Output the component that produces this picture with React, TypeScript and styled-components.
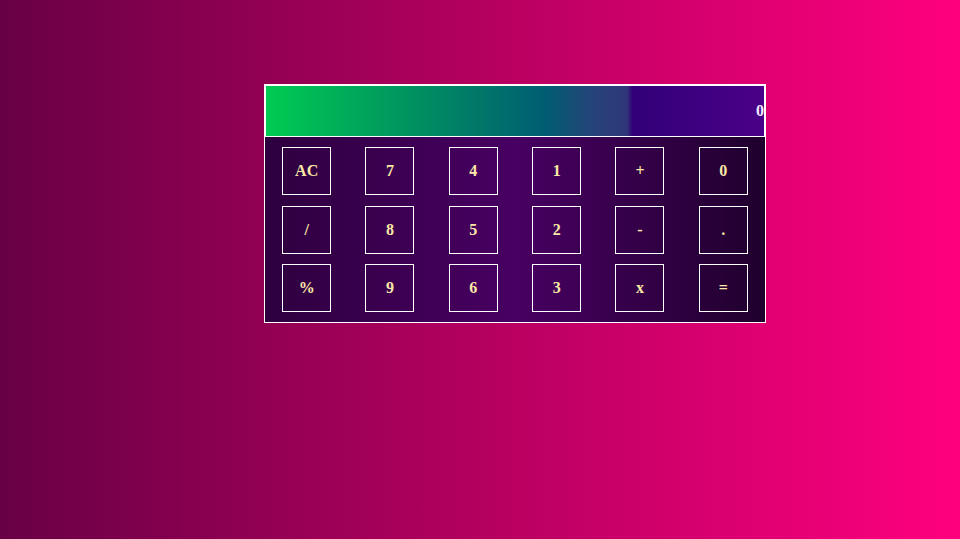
import React from "react";
import styled, { createGlobalStyle } from "styled-components";

const Global = createGlobalStyle`
  html, body { margin: 0; padding: 0; }
  body {
    width: 960px;
    height: 539px;
    overflow: hidden;
    background: linear-gradient(to right, #680045 0%, #b4005f 50%, #ff007f 100%);
    font-family: "Liberation Serif", "Times New Roman", serif;
  }
`;

const Page = styled.div`
  width: 960px;
  height: 539px;
  padding-top: 84px;
  padding-left: 264px;
  box-sizing: border-box;
`;

const Calculator = styled.div`
  width: 502px;
  box-sizing: border-box;
  border: 1px solid #ffffff;
  display: flex;
  flex-direction: column;
`;

const Display = styled.div`
  height: 52px;
  box-sizing: border-box;
  border: 1px solid #ffffff;
  background: linear-gradient(
    to right,
    #00cb52 0%,
    #009060 30%,
    #005d72 56%,
    #27427a 66%,
    #2f3679 72.5%,
    #320078 73.6%,
    #4a0088 100%
  );
  display: flex;
  align-items: center;
  justify-content: flex-end;
  color: #f2eaff;
  font-weight: bold;
  font-size: 16px;
  overflow: hidden;
  padding-right: 0;
`;

const Keypad = styled.div`
  height: 185px;
  box-sizing: border-box;
  padding: 10px 0;
  background: linear-gradient(to right, #2e003f 0%, #480062 50%, #1f002d 100%);
  display: grid;
  grid-template-columns: repeat(6, 1fr);
  grid-template-rows: repeat(3, 48px);
  grid-auto-flow: column;
  row-gap: 10.5px;
  justify-items: center;
`;

const Key = styled.button`
  width: 49px;
  height: 48px;
  box-sizing: border-box;
  border: 1px solid #ffffff;
  background: transparent;
  color: #fce8a6;
  font-family: "Liberation Serif", "Times New Roman", serif;
  font-weight: bold;
  font-size: 16px;
  padding: 0;
  margin: 0;
  cursor: pointer;
`;

const keys = ["AC", "/", "%", "7", "8", "9", "4", "5", "6", "1", "2", "3", "+", "-", "x", "0", ".", "="];

export default function App() {
  return (
    <>
      <Global />
      <Page>
        <Calculator>
          <Display>0</Display>
          <Keypad>
            {keys.map((k) => (
              <Key key={k}>{k}</Key>
            ))}
          </Keypad>
        </Calculator>
      </Page>
    </>
  );
}
